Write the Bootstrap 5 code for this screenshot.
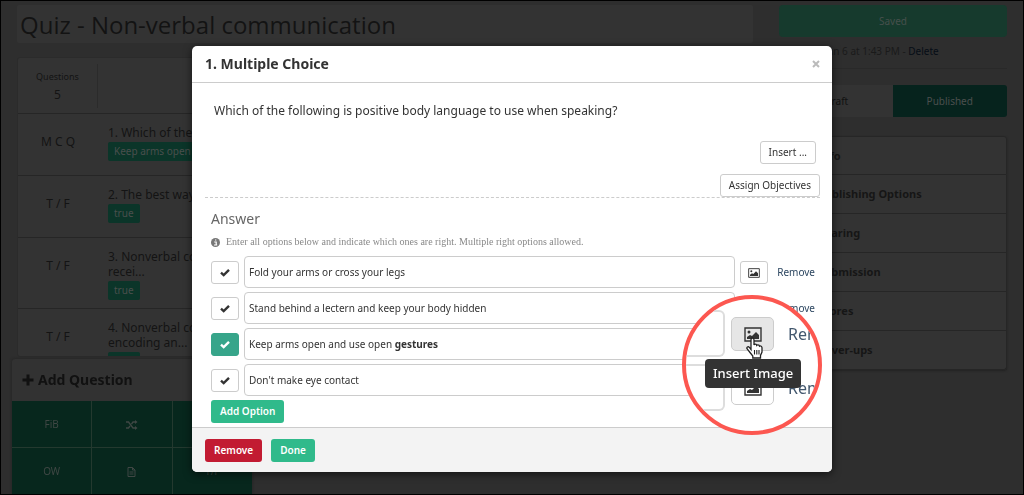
<!DOCTYPE html>
<html lang="en">
<head>
<meta charset="utf-8">
<meta name="viewport" content="width=device-width, initial-scale=1">
<title>Quiz - Non-verbal communication</title>
<link href="https://cdn.jsdelivr.net/npm/bootstrap@5.3.0/dist/css/bootstrap.min.css" rel="stylesheet">
<style>
  html, body { height: 100%; }
  body { font-family: "Noto Sans", "Open Sans", sans-serif; font-size: 12px; line-height: 16px; color: #141414; background: #2e2e2e; overflow: hidden; }
  .page-frame { position: fixed; inset: 0; border: 1px solid #000; pointer-events: none; z-index: 2000; }

  /* page behind the dialog */
  .page { padding: 5px 17px 0; gap: 26px; }
  .page main { min-width: 0; }
  .side { width: 228px; }
  .quiz-title { height: 38px; padding: 0 3px; font-family: "Open Sans", sans-serif; font-size: 24px; color: #131313; background: #333; border: 0; border-radius: 2px; }
  .question-list { margin-top: 14px; height: calc(100vh - 195px); background: #333; border-radius: 3px; border: 1px solid #2b2b2b; }
  .list-top { height: 55px; }
  .count-cell { width: 80px; height: 44px; border-right: 1px solid #2b2b2b; font-size: 9px; padding-top: 5px; }
  .count-cell strong { font-size: 12px; font-weight: 400; margin-top: 2px; }
  .q-row { min-height: 62px; border-top: 1px solid #262626; padding: 11px 0 8px; font-size: 12px; line-height: 15px; }
  .q-kind { width: 80px; padding-top: 9px; }
  .q-text { margin-left: 10px; white-space: nowrap; }
  .q-tag { display: block; width: max-content; height: 19px; margin-top: 2px; padding: 0 6px; border-radius: 2px; background: #0b3529; color: #4a4f4d; font-size: 10px; line-height: 19px; }

  .btn-saved { height: 32px; background: #163a2d; color: #46504c; font-size: 10px; border: 0; border-radius: 4px; }
  .saved-line { font-size: 10px; margin-top: 6px; padding-bottom: 9px; border-bottom: 1px solid #292929; color: #1a1a1a; }
  .saved-line a { color: #060d16; text-decoration: none; }
  .status .btn { height: 32px; font-size: 10px; padding: 0; border: 0; border-radius: 3px; color: #111; background: #333; }
  .status .btn-live { background: #06231d; color: #4b4f4e; }
  .side-menu { margin-top: 19px; box-shadow: 0 1px 2px #222; border-radius: 3px; }
  .side-menu a { height: 39px; padding: 0 0 0 38px; background: #333; border-color: #262626; color: #161616; font-size: 11px; font-weight: 700; }

  .add-panel { left: 12px; bottom: 1px; width: 240px; background: #323232; border-radius: 3px 3px 0 0; box-shadow: 0 0 3px #222; }
  .add-panel h2 { height: 42px; margin: 0; padding-left: 10px; gap: 4px; font-size: 14px; font-weight: 700; color: #111; }
  .tiles { display: grid; grid-template-columns: repeat(3, 1fr); gap: 1px; background: #24392f; }
  .tiles button { height: 46px; border: 0; background: #07271d; color: #3f4744; font-size: 10px; padding: 0; }

  /* dialog */
  .modal-dialog { max-width: 640px; margin: 46px auto 0; }
  .modal-content { border: 0; border-radius: 5px; color: #333; background: #fff; box-shadow: 0 2px 8px rgba(0,0,0,.6); }
  .modal-header { height: 37px; padding: 0 12px 0 13px; border-color: #ccc; }
  .modal-title { font-size: 14px; font-weight: 700; line-height: 20px; color: #333; }
  .x-close { border: 0; background: none; padding: 0; line-height: 0; color: #bbb; }
  .modal-body { padding: 18px 12px 4px 13px; }
  .prompt { font-size: 12px; line-height: 20px; margin: 0 0 20px 9px; }
  .btn-tool { height: 23px; padding: 0 8px; border: 1px solid #ccc; border-radius: 3px; background: #fff; color: #333; font-size: 10px; line-height: 21px; }
  .btn-pick { width: 28px; padding: 0; }
  .btn-pick.picked { background: #37a58a; border-color: #37a58a; color: #fff; }
  .rule { border-bottom: 1px dashed #ccc; gap: 10px; }
  .answers { padding: 0 5px 0 6px; }
  .answers h3 { margin: 11px 0 6px; font-size: 14px; line-height: 20px; font-weight: 400; color: #666; }
  .hint { font: 10px/14px "Liberation Serif", serif; color: #888; margin: 0 0 7px; gap: 6px; }
  .option { margin-bottom: 4px; gap: 5px; }
  .option .form-control { height: 32px; padding: 0 4px; border: 1px solid #ccc; border-radius: 4px; font-size: 10px; line-height: 30px; color: #333; white-space: nowrap; }
  .remove-link { font-size: 10px; color: #2c4660; text-decoration: none; margin-left: 4px; }
  .btn-solid { height: 23px; padding: 0 9px; border: 0; border-radius: 3px; font-size: 10px; font-weight: 600; line-height: 23px; color: #fff; background: #30ba8b; }
  .btn-solid.danger { background: #c21b32; }
  .modal-footer { height: 45px; padding: 0 13px; gap: 9px; background: #f3f3f3; border-color: #ccc; border-radius: 0 0 5px 5px; }
  .modal-footer > * { margin: 0; }

  /* magnified detail */
  .lens { right: 10px; bottom: 37px; width: 140px; height: 140px; border: 4px solid #fc5750; border-radius: 50%; overflow: hidden; background: #fff; padding-top: 11px; z-index: 5; }
  .lens-row { height: 47px; margin-bottom: 7px; }
  .lens-box { flex: 0 0 39px; height: 47px; border: 2px solid #ddd; border-left: 0; border-radius: 0 6px 6px 0; }
  .lens-btn { flex: 0 0 43px; height: 34px; margin-left: 6px; padding: 0; border: 1px solid #ccc; border-radius: 5px; background: #fff; color: #333; }
  .lens-btn.hovered { background: #e6e6e6; }
  .lens-row a { margin-left: 14px; font-size: 16px; color: #42576d; text-decoration: none; }
  .lens-tip { left: 19px; top: 60px; height: 29px; padding: 0 8px; border-radius: 4px; background: #333; color: #fff; font-size: 13px; font-weight: 500; line-height: 28px; white-space: nowrap; }
  .lens-cursor { left: 60px; top: 38px; }
</style>
</head>
<body>
<svg width="0" height="0" class="position-absolute" aria-hidden="true">
  <symbol id="tick" viewBox="0 0 12 10"><path d="M1.2 5.2 4.4 8.2 10.8 1.8" fill="none" stroke="currentColor" stroke-width="2.8"/></symbol>
  <symbol id="picture" viewBox="0 0 18 15"><path d="M1 1h16v13H1z" fill="none" stroke="currentColor" stroke-width="1.4"/><circle cx="5" cy="5" r="1.5" fill="currentColor"/><path d="M3 12v-2l3-2 2 1 4-4 3 3v4z" fill="currentColor"/></symbol>
</svg>

<div class="page d-flex">
  <main class="flex-grow-1">
    <input class="quiz-title w-100 d-block" type="text" aria-label="Quiz title" value="Quiz - Non-verbal communication">
    <section class="question-list overflow-hidden">
      <div class="list-top d-flex align-items-center">
        <div class="count-cell d-flex flex-column align-items-center">Questions <strong>5</strong></div>
      </div>
      <div class="q-row d-flex"><div class="q-kind text-center">M C Q</div><div class="q-text">1. Which of the following is positive body<span class="q-tag">Keep arms open and use open gestures</span></div></div>
      <div class="q-row d-flex"><div class="q-kind text-center">T / F</div><div class="q-text">2. The best way to communicate<span class="q-tag">true</span></div></div>
      <div class="q-row d-flex"><div class="q-kind text-center">T / F</div><div class="q-text">3. Nonverbal communication<br>recei...<span class="q-tag">true</span></div></div>
      <div class="q-row d-flex"><div class="q-kind text-center">T / F</div><div class="q-text">4. Nonverbal communication<br>encoding an...<span class="q-tag">true</span></div></div>
    </section>
  </main>
  <aside class="side flex-shrink-0">
    <button class="btn btn-saved w-100 d-block p-0" type="button">Saved</button>
    <p class="saved-line mb-3">Saved on Jun 6 at 1:43 PM - <a href="#">Delete</a></p>
    <div class="status btn-group w-100">
      <button class="btn w-50" type="button">Draft</button>
      <button class="btn btn-live w-50" type="button">Published</button>
    </div>
    <nav class="side-menu list-group">
      <a href="#" class="list-group-item d-flex align-items-center">Info</a>
      <a href="#" class="list-group-item d-flex align-items-center">Publishing Options</a>
      <a href="#" class="list-group-item d-flex align-items-center">Sharing</a>
      <a href="#" class="list-group-item d-flex align-items-center">Submission</a>
      <a href="#" class="list-group-item d-flex align-items-center">Scores</a>
      <a href="#" class="list-group-item d-flex align-items-center">Cover-ups</a>
    </nav>
  </aside>
</div>

<section class="add-panel position-fixed">
  <h2 class="d-flex align-items-center"><svg width="12" height="12" viewBox="0 0 12 12" aria-hidden="true"><path d="M6 .5v11M.5 6h11" stroke="currentColor" stroke-width="3"/></svg>Add Question</h2>
  <div class="tiles">
    <button type="button">FiB</button>
    <button type="button" aria-label="Matching"><svg width="12" height="10" viewBox="0 0 12 10" fill="none" stroke="currentColor" stroke-width="1.3"><path d="M0 2h2.500L7 8h3M0 8h2.500L4 6M5.500 4 7 2h3"/><path d="M9 0l2.500 2L9 4zM9 6l2.500 2L9 10z" fill="currentColor" stroke="none"/></svg></button>
    <button type="button" aria-label="Multiple choice"></button>
    <button type="button">OW</button>
    <button type="button" aria-label="Essay"><svg width="9" height="10" viewBox="0 0 9 10" fill="none" stroke="currentColor"><path d="M1 .5h4.500L8 3v6.500H1zM5.500.5V3H8M2.500 5h4M2.500 7h4"/></svg></button>
    <button type="button">T/F</button>
  </div>
</section>

<div class="modal d-block" tabindex="-1" role="dialog" aria-labelledby="dlgTitle">
  <div class="modal-dialog">
    <div class="modal-content">
      <div class="modal-header">
        <h1 class="modal-title" id="dlgTitle">1. Multiple Choice</h1>
        <button class="x-close" type="button" aria-label="Close"><svg width="8" height="8" viewBox="0 0 8 8"><path d="M1 1l6 6M7 1 1 7" stroke="currentColor" stroke-width="2"/></svg></button>
      </div>
      <div class="modal-body">
        <p class="prompt">Which of the following is positive body language to use when speaking?</p>
        <div class="rule d-flex flex-column align-items-end">
          <button class="btn-tool me-1" type="button">Insert ...</button>
          <button class="btn-tool" type="button">Assign Objectives</button>
        </div>
        <div class="answers">
          <h3>Answer</h3>
          <p class="hint d-flex align-items-center"><svg width="9" height="9" viewBox="0 0 9 9" aria-hidden="true"><circle cx="4.500" cy="4.500" r="4.500" fill="#777"/><path d="M3.200 4h2v3M3 7h3.200M4 2h1.300" stroke="#fff" stroke-width="1.200" fill="none"/></svg>Enter all options below and indicate which ones are right. Multiple right options allowed.</p>
          <div class="option d-flex align-items-center">
            <button class="btn-tool btn-pick flex-shrink-0" type="button" aria-label="Mark option 1 right"><svg width="10" height="9"><use href="#tick"/></svg></button>
            <input class="form-control" type="text" aria-label="Option 1" value="Fold your arms or cross your legs">
            <button class="btn-tool btn-pick flex-shrink-0" type="button" aria-label="Insert image"><svg width="12" height="10"><use href="#picture"/></svg></button>
            <a class="remove-link" href="#">Remove</a>
          </div>
          <div class="option d-flex align-items-center">
            <button class="btn-tool btn-pick flex-shrink-0" type="button" aria-label="Mark option 2 right"><svg width="10" height="9"><use href="#tick"/></svg></button>
            <input class="form-control" type="text" aria-label="Option 2" value="Stand behind a lectern and keep your body hidden">
            <button class="btn-tool btn-pick flex-shrink-0" type="button" aria-label="Insert image"><svg width="12" height="10"><use href="#picture"/></svg></button>
            <a class="remove-link" href="#">Remove</a>
          </div>
          <div class="option d-flex align-items-center">
            <button class="btn-tool btn-pick picked flex-shrink-0" type="button" aria-label="Mark option 3 right"><svg width="10" height="9"><use href="#tick"/></svg></button>
            <div class="form-control" contenteditable="true" role="textbox" aria-label="Option 3">Keep arms open and use open <b>gestures</b></div>
            <button class="btn-tool btn-pick flex-shrink-0" type="button" aria-label="Insert image"><svg width="12" height="10"><use href="#picture"/></svg></button>
            <a class="remove-link invisible" href="#">Remove</a>
          </div>
          <div class="option d-flex align-items-center">
            <button class="btn-tool btn-pick flex-shrink-0" type="button" aria-label="Mark option 4 right"><svg width="10" height="9"><use href="#tick"/></svg></button>
            <input class="form-control" type="text" aria-label="Option 4" value="Don't make eye contact">
            <button class="btn-tool btn-pick flex-shrink-0" type="button" aria-label="Insert image"><svg width="12" height="10"><use href="#picture"/></svg></button>
            <a class="remove-link invisible" href="#">Remove</a>
          </div>
          <button class="btn-solid" type="button">Add Option</button>
        </div>
      </div>
      <div class="modal-footer justify-content-start">
        <button class="btn-solid danger" type="button">Remove</button>
        <button class="btn-solid" type="button">Done</button>
      </div>

      <div class="lens position-absolute">
        <div class="lens-row d-flex align-items-center">
          <div class="lens-box"></div>
          <button class="lens-btn hovered" type="button" aria-label="Insert image"><svg width="18" height="15"><use href="#picture"/></svg></button>
          <a href="#">Remove</a>
        </div>
        <div class="lens-row d-flex align-items-center">
          <div class="lens-box"></div>
          <button class="lens-btn" type="button" aria-label="Insert image"><svg width="18" height="15"><use href="#picture"/></svg></button>
          <a href="#">Remove</a>
        </div>
        <div class="lens-tip position-absolute" role="tooltip">Insert Image</div>
        <svg class="lens-cursor position-absolute" width="18" height="22" viewBox="0 0 18 22" aria-hidden="true"><path d="M5 12.500V3q0-2 1.500-2T8 3v5q.5-1 1.500-.8 1 .1 1.200 1.200.6-.7 1.500-.5 1.100.2 1.300 1.300.8-.5 1.700 0 .8.500.8 1.600v4.200l-1.500 3.500V21H6.800v-2L4 15.500 1.200 12q-.8-1.300.2-2 1-.6 2 .4z" fill="#fff" stroke="#222" stroke-width="1.300"/><path d="M8.500 13v4.500M10.800 13v4.500M13 13v4.500" stroke="#222" stroke-width="1.100"/></svg>
      </div>
    </div>
  </div>
</div>
<div class="page-frame"></div>
<script src="https://cdn.jsdelivr.net/npm/bootstrap@5.3.0/dist/js/bootstrap.bundle.min.js"></script>
</body>
</html>
